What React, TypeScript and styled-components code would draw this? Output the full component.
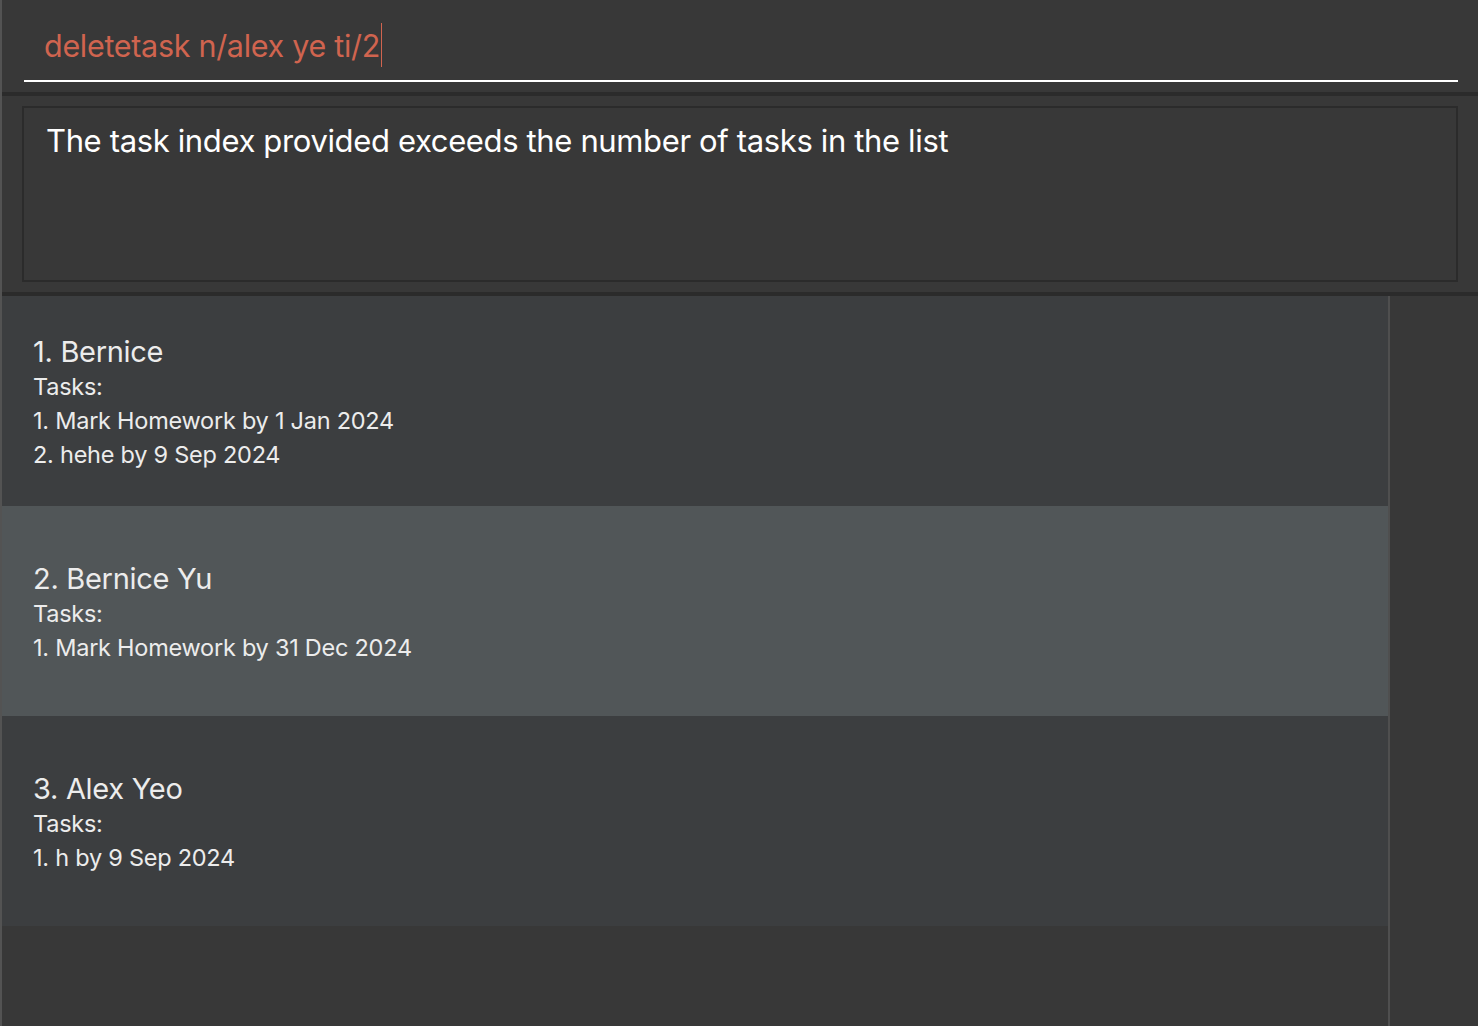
import React from 'react';
import styled, { createGlobalStyle } from 'styled-components';

const GlobalStyle = createGlobalStyle`
  html, body {
    margin: 0;
    padding: 0;
    background: #383838;
  }
  * {
    box-sizing: border-box;
  }
`;

const Window = styled.div`
  height: 1026px;
  display: flex;
  flex-direction: column;
  background: #383838;
  border-left: 2px solid #535353;
  font-family: Inter, 'Noto Sans', sans-serif;
  overflow: hidden;
`;

const CommandArea = styled.div`
  height: 92px;
  padding: 0 20px 0 22px;
`;

const CommandBox = styled.div`
  height: 82px;
  border-bottom: 2px solid #ffffff;
  display: flex;
  align-items: center;
  padding: 10px 0 0 20px;
`;

const CommandText = styled.span`
  font-size: 30.5px;
  color: #d0644f;
  white-space: pre;
  letter-spacing: -0.3px;
`;

const Caret = styled.span`
  display: inline-block;
  width: 1px;
  height: 44px;
  margin-left: 1px;
  background: #d0644f;
`;

const Divider = styled.div`
  height: 4px;
  background: #2b2b2b;
`;

const ResultArea = styled.div`
  padding: 10px 20px;
`;

const ResultBox = styled.div`
  height: 176px;
  border: 2px solid #2b2b2b;
  background: #383838;
  padding: 14px 22px;
`;

const ResultText = styled.div`
  font-size: 31px;
  line-height: 1.21;
  color: #ffffff;
  letter-spacing: -0.36px;
`;

const ListArea = styled.div`
  flex: 1;
  display: flex;
`;

const PersonList = styled.div`
  width: 1388px;
  border-right: 2px solid #4f4f4f;
  display: flex;
  flex-direction: column;
`;

const Filler = styled.div`
  flex: 1;
  background: #383838;
`;

const Cell = styled.div<{ $selected?: boolean }>`
  height: 210px;
  padding: 4px 0 0 31px;
  display: flex;
  flex-direction: column;
  justify-content: center;
  background: ${(p) => (p.$selected ? '#515658' : '#3c3e40')};
  color: #ececec;
`;

const Name = styled.div`
  font-size: 29px;
  line-height: 36px;
  letter-spacing: -0.3px;
`;

const Line = styled.div`
  font-size: 23.5px;
  line-height: 34px;
  letter-spacing: -0.25px;
`;

const persons = [
  { name: 'Bernice', tasks: ['Mark Homework by 1 Jan 2024', 'hehe by 9 Sep 2024'] },
  { name: 'Bernice Yu', tasks: ['Mark Homework by 31 Dec 2024'], selected: true },
  { name: 'Alex Yeo', tasks: ['h by 9 Sep 2024'] },
];

const App = () => {
  return (
    <>
      <GlobalStyle />
      <Window>
        <CommandArea>
          <CommandBox>
            <CommandText>deletetask n/alex ye ti/2</CommandText>
            <Caret />
          </CommandBox>
        </CommandArea>
        <Divider />
        <ResultArea>
          <ResultBox>
            <ResultText>The task index provided exceeds the number of tasks in the list</ResultText>
          </ResultBox>
        </ResultArea>
        <Divider />
        <ListArea>
          <PersonList>
            {persons.map((p, i) => (
              <Cell key={p.name} $selected={p.selected}>
                <Name>
                  {i + 1}. {p.name}
                </Name>
                <Line>Tasks:</Line>
                {p.tasks.map((t, j) => (
                  <Line key={t}>
                    {j + 1}. {t}
                  </Line>
                ))}
              </Cell>
            ))}
            <Filler />
          </PersonList>
        </ListArea>
      </Window>
    </>
  );
};

export default App;
